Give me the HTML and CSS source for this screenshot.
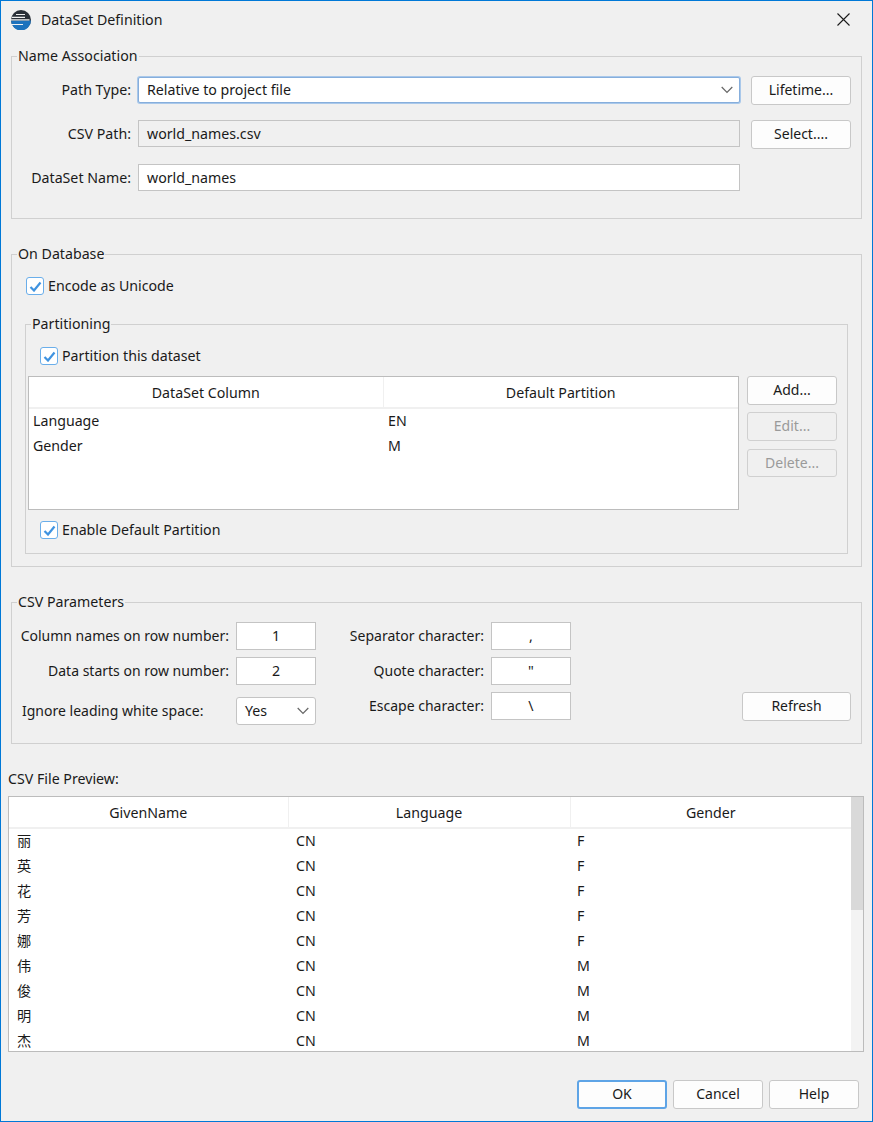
FILE: index.html
```html
<!DOCTYPE html>
<html lang="en">
<head>
  <meta charset="UTF-8">
  <meta name="viewport" content="width=device-width, initial-scale=1.0">
  <title>DataSet Definition</title>
  <link rel="stylesheet" href="styles.css">
</head>
<body>
  <div class="dialog">
    <header class="titlebar">
      <svg class="app-icon" width="20" height="20" viewBox="0 0 20 20">
        <circle cx="10" cy="10" r="10" fill="#2a3038"/>
        <path d="M0 10.5 H20 A10 10 0 0 1 0 10.5 Z" fill="#1c72bd"/>
        <path d="M5 4.5 H14 M1 7.3 H14 M0 9.8 H18.5 M0 14.5 H12" stroke="#f0f0f0" stroke-width="1.2"/>
      </svg>
      <span class="title">DataSet Definition</span>
      <svg class="close" width="13" height="13" viewBox="0 0 13 13">
        <path d="M0.5 0.5 L12.5 12.5 M12.5 0.5 L0.5 12.5" stroke="#1a1a1a" stroke-width="1.1" fill="none"/>
      </svg>
    </header>

    <main class="content">
      <fieldset class="group">
        <legend>Name Association</legend>
        <div class="name-grid">
          <label class="field-label">Path Type:</label>
          <div class="combo combo-focus">
            <span>Relative to project file</span>
            <svg class="chevron" width="12" height="8" viewBox="0 0 12 8"><path d="M0.7 1 L6 6.5 L11.3 1" fill="none" stroke="#666" stroke-width="1.2"/></svg>
          </div>
          <button class="btn">Lifetime...</button>

          <label class="field-label">CSV Path:</label>
          <div class="input input-left input-disabled">world_names.csv</div>
          <button class="btn">Select....</button>

          <label class="field-label">DataSet Name:</label>
          <div class="input input-left">world_names</div>
        </div>
      </fieldset>

      <fieldset class="group group-db">
        <legend>On Database</legend>
        <label class="check-row check-encode">
          <span class="check"><svg width="13" height="11" viewBox="0 0 13 11"><path d="M1.5 6 L5 9.5 L11.5 1.5" fill="none" stroke="#3f93e0" stroke-width="2.2"/></svg></span>
          Encode as Unicode
        </label>

        <fieldset class="group group-inner">
          <legend>Partitioning</legend>
          <label class="check-row check-partition">
            <span class="check"><svg width="13" height="11" viewBox="0 0 13 11"><path d="M1.5 6 L5 9.5 L11.5 1.5" fill="none" stroke="#3f93e0" stroke-width="2.2"/></svg></span>
            Partition this dataset
          </label>

          <div class="partition-row">
            <div class="listbox partition-list">
              <table class="grid-table">
                <colgroup><col class="pcol-a"><col class="pcol-b"></colgroup>
                <thead><tr><th>DataSet Column</th><th>Default Partition</th></tr></thead>
                <tbody>
                  <tr><td>Language</td><td>EN</td></tr>
                  <tr><td>Gender</td><td>M</td></tr>
                </tbody>
              </table>
            </div>
            <div class="side-buttons">
              <button class="btn btn-side">Add...</button>
              <button class="btn btn-side btn-disabled">Edit...</button>
              <button class="btn btn-side btn-disabled btn-delete">Delete...</button>
            </div>
          </div>

          <label class="check-row check-enable">
            <span class="check"><svg width="13" height="11" viewBox="0 0 13 11"><path d="M1.5 6 L5 9.5 L11.5 1.5" fill="none" stroke="#3f93e0" stroke-width="2.2"/></svg></span>
            Enable Default Partition
          </label>
        </fieldset>
      </fieldset>

      <fieldset class="group group-csv">
        <legend>CSV Parameters</legend>
        <div class="csv-grid">
          <label class="field-label">Column names on row number:</label>
          <div class="input input-small">1</div>
          <label class="field-label">Separator character:</label>
          <div class="input input-small">,</div>
          <span></span>

          <label class="field-label">Data starts on row number:</label>
          <div class="input input-small">2</div>
          <label class="field-label">Quote character:</label>
          <div class="input input-small">"</div>
          <span></span>

          <label class="field-label label-ignore">Ignore leading white space:</label>
          <div class="combo combo-small">
            <span>Yes</span>
            <svg class="chevron" width="12" height="8" viewBox="0 0 12 8"><path d="M0.7 1 L6 6.5 L11.3 1" fill="none" stroke="#666" stroke-width="1.2"/></svg>
          </div>
          <label class="field-label">Escape character:</label>
          <div class="input input-small">\</div>
          <button class="btn btn-refresh">Refresh</button>
        </div>
      </fieldset>

      <div class="preview-label">CSV File Preview:</div>
      <div class="listbox preview-list">
        <table class="grid-table">
          <colgroup><col class="col-a"><col class="col-b"><col class="col-c"></colgroup>
          <thead><tr><th>GivenName</th><th>Language</th><th>Gender</th></tr></thead>
          <tbody>
            <tr><td>丽</td><td>CN</td><td>F</td></tr>
            <tr><td>英</td><td>CN</td><td>F</td></tr>
            <tr><td>花</td><td>CN</td><td>F</td></tr>
            <tr><td>芳</td><td>CN</td><td>F</td></tr>
            <tr><td>娜</td><td>CN</td><td>F</td></tr>
            <tr><td>伟</td><td>CN</td><td>M</td></tr>
            <tr><td>俊</td><td>CN</td><td>M</td></tr>
            <tr><td>明</td><td>CN</td><td>M</td></tr>
            <tr><td>杰</td><td>CN</td><td>M</td></tr>
          </tbody>
        </table>
        <div class="scrollbar"><div class="thumb"></div></div>
      </div>

      <footer class="footer">
        <button class="btn btn-footer btn-default">OK</button>
        <button class="btn btn-footer">Cancel</button>
        <button class="btn btn-footer">Help</button>
      </footer>
    </main>
  </div>
</body>
</html>
```

FILE: styles.css
```css
* {
  box-sizing: border-box;
}
html, body {
  margin: 0;
  height: 100%;
}
body {
  font-family: "Noto Sans", "Noto Sans CJK SC", sans-serif;
  font-size: 14.2px;
  line-height: 20px;
  color: #1a1a1a;
  background-color: #f0f0f0;
  overflow: hidden;
}
.dialog {
  height: 1122px;
  border: 1px solid #0078d7;
  background-color: #f0f0f0;
}

/* title bar */
.titlebar {
  height: 45px;
  display: flex;
  align-items: flex-start;
  padding: 9px 22px 0 10px;
}
.app-icon {
  flex: none;
}
.title {
  margin-left: 10px;
  flex: 1;
}
.close {
  margin-top: 3px;
}

.content {
  padding: 0 8px 0 7px;
}

/* group boxes */
.group {
  margin: 0 2px 0 3px;
  padding: 0;
  min-width: 0;
  border: 1px solid #d0d0d0;
}
.group legend {
  margin-left: 5px;
  padding: 0 1px;
  line-height: 20px;
}
.group-db, .group-csv {
  margin-top: 25px;
}
.group-inner {
  margin: 18px 13px 12px 13px;
  height: 240px;
}
.group-inner legend {
  margin-left: 5px;
}

/* name association */
.name-grid {
  display: grid;
  grid-template-columns: 119px 602px 100px;
  column-gap: 7px;
  grid-template-rows: 29px 29px 27px;
  row-gap: 15px;
  padding: 10px 0 27px 0;
  align-items: start;
}
.name-grid .btn {
  margin-left: 4px;
  width: 100px;
}
.name-grid .combo {
  margin-top: 1px;
}
.field-label {
  display: block;
  text-align: right;
  line-height: 27px;
  white-space: nowrap;
}

/* inputs */
.input, .combo {
  height: 27px;
  line-height: 25px;
  background-color: #fff;
  border: 1px solid #c4c4c4;
}
.input {
  text-align: center;
}
.input-left {
  text-align: left;
  padding-left: 8px;
}
.input-disabled {
  background-color: #f0f0f0;
}
.input-small {
  width: 80px;
  height: 28px;
  line-height: 26px;
}
.combo {
  display: flex;
  align-items: center;
  justify-content: space-between;
  padding: 0 6px 1px 8px;
  border-radius: 2px;
}
.combo-focus {
  height: 26px;
  border-color: #86aedc;
  box-shadow: 0 0 0 1px #a9c8ea;
}
.combo-small {
  width: 80px;
  height: 28px;
  margin-top: 5px;
  border-radius: 3px;
}

/* buttons */
.btn {
  display: block;
  height: 29px;
  padding: 0 0 2px;
  font: inherit;
  font-size: 14px;
  color: inherit;
  background-color: #fdfdfd;
  border: 1px solid #c8c8c8;
  border-radius: 3px;
}
.btn-disabled {
  color: #9a9a9a;
  background-color: #f0f0f0;
  border-color: #d0d0d0;
}

/* checkboxes */
.check-row {
  display: flex;
  align-items: center;
  height: 20px;
}
.check {
  width: 18px;
  height: 18px;
  margin-right: 4px;
  display: flex;
  align-items: center;
  justify-content: center;
  background-color: #fff;
  border: 1px solid #6aaeea;
  border-radius: 3px;
}
.check-encode {
  margin: 12px 0 0 14px;
}
.check-partition {
  margin: 12px 0 0 14px;
}
.check-enable {
  margin: 10px 0 0 14px;
}

/* tables */
.listbox {
  background-color: #fff;
  border: 1px solid #bcbcbc;
  overflow: hidden;
}
.grid-table {
  border-collapse: collapse;
  table-layout: fixed;
}
.grid-table th {
  height: 31px;
  padding: 1px 0 0;
  font-weight: normal;
  text-align: center;
  border-bottom: 2px solid #f0f0f0;
  border-right: 1px solid #f0f0f0;
}
.grid-table th:last-child {
  border-right: none;
}

/* partitions */
.partition-row {
  display: flex;
  margin: 10px 0 0 2px;
}
.partition-list {
  width: 711px;
  height: 134px;
}
.pcol-a {
  width: 354px;
}
.pcol-b {
  width: 355px;
}
.partition-list td {
  height: 25px;
  padding: 0 4px;
}
.partition-list td:last-child {
  padding-left: 5px;
}
.side-buttons {
  margin-left: 8px;
  display: flex;
  flex-direction: column;
  gap: 7px;
}
.btn-side {
  width: 90px;
  height: 29px;
}
.btn-delete {
  height: 28px;
  margin-top: 1px;
  padding-bottom: 1px;
}

/* csv parameters */
.csv-grid {
  display: grid;
  grid-template-columns: 217px 80px 161px 80px 1fr;
  column-gap: 7px;
  grid-template-rows: 28px 28px 29px;
  row-gap: 7px;
  padding: 10px 10px 22px 0;
  align-items: start;
}
.csv-grid .field-label {
  font-size: 14px;
  line-height: 28px;
}
.csv-grid .label-ignore {
  margin-top: 5px;
  text-align: left;
  margin-left: 10px;
}
.btn-refresh {
  width: 109px;
  justify-self: end;
}

/* preview */
.preview-label {
  margin-top: 25px;
}
.preview-list {
  position: relative;
  margin-top: 7px;
  height: 256px;
  display: flex;
}
.preview-list .grid-table {
  flex: none;
  height: 0;
}
.col-a {
  width: 279px;
}
.col-b {
  width: 282px;
}
.col-c {
  width: 281px;
}
.preview-list td {
  height: 25px;
  padding: 0 7px;
}
.preview-list td:first-child, .preview-list td:nth-child(2) {
  padding-left: 8px;
}
.scrollbar {
  width: 12px;
  height: 100%;
  background-color: #f3f3f3;
}
.thumb {
  height: 113px;
  background-color: #d9d9d9;
}

/* footer */
.footer {
  margin-top: 28px;
  padding-right: 5px;
  display: flex;
  justify-content: flex-end;
  gap: 6px;
}
.btn-footer {
  width: 90px;
}
.btn-default {
  border: 2px solid #5ea4e6;
}
```
